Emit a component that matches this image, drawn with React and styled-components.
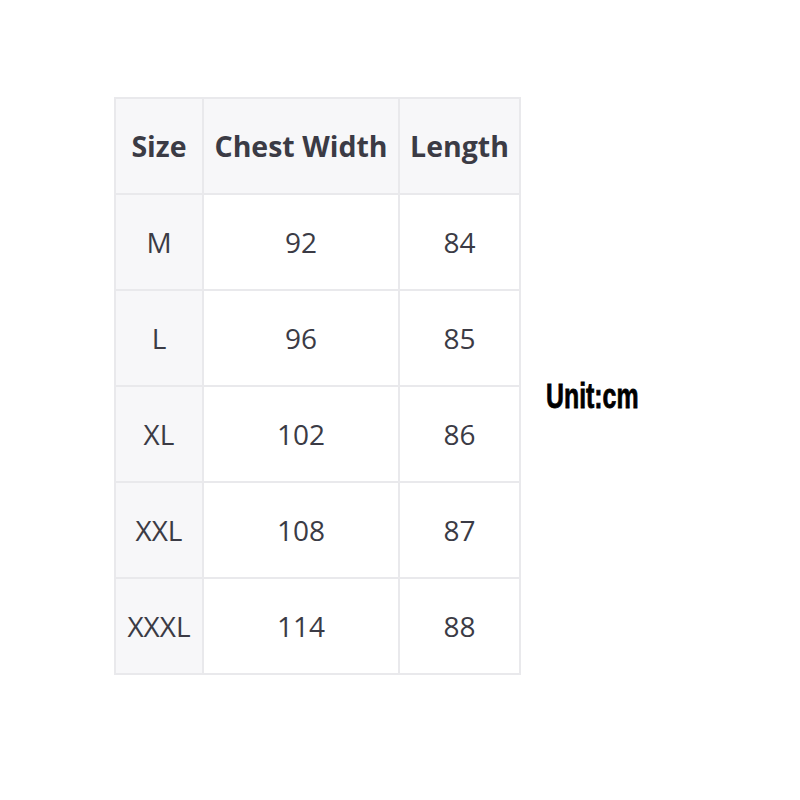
import React from 'react';
import styled, { createGlobalStyle } from 'styled-components';

const Global = createGlobalStyle`
  body {
    margin: 0;
    background: #ffffff;
  }
`

const Page = styled.div`
  width: 800px;
  height: 800px;
  display: flex;
  align-items: flex-start;
  padding: 97px 0 0 114px;
  box-sizing: border-box;
`

const Table = styled.table`
  border-collapse: collapse;
  width: 405px;
  table-layout: fixed;
  font-family: "Open Sans", "Noto Sans", sans-serif;
  color: #3b3b45;
`

const Cell = styled.td`
  border: 2px solid #e9e9ec;
  height: 94px;
  padding: 0;
  text-align: center;
  font-size: ${p => (p.$head ? '28.5px' : '28px')};
  font-weight: ${p => (p.$head ? 700 : 400)};
  background: ${p => (p.$shade ? '#f7f7f9' : '#ffffff')};
  white-space: nowrap;
`

const Unit = styled.div`
  margin: 279px 0 0 25px;
  font-family: "Liberation Sans", Arial, sans-serif;
  font-weight: 700;
  font-size: 35px;
  color: #000;
  transform: scaleX(0.71);
  transform-origin: left center;
  -webkit-text-stroke: 0.8px #000;
`

const rows = [
  ['M', 92, 84],
  ['L', 96, 85],
  ['XL', 102, 86],
  ['XXL', 108, 87],
  ['XXXL', 114, 88],
];

const App = () => {
  return (
    <>
      <Global />
      <Page>
        <Table>
          <colgroup>
            <col style={{ width: 88 }} />
            <col style={{ width: 196 }} />
            <col style={{ width: 121 }} />
          </colgroup>
          <tbody>
            <tr>
              <Cell $head $shade>Size</Cell>
              <Cell $head $shade>Chest Width</Cell>
              <Cell $head $shade>Length</Cell>
            </tr>
            {rows.map((r, key) =>
              <tr key={key}>
                <Cell $shade>{r[0]}</Cell>
                <Cell>{r[1]}</Cell>
                <Cell>{r[2]}</Cell>
              </tr>
            )}
          </tbody>
        </Table>
        <Unit>Unit:cm</Unit>
      </Page>
    </>
  );
}
export default App;
